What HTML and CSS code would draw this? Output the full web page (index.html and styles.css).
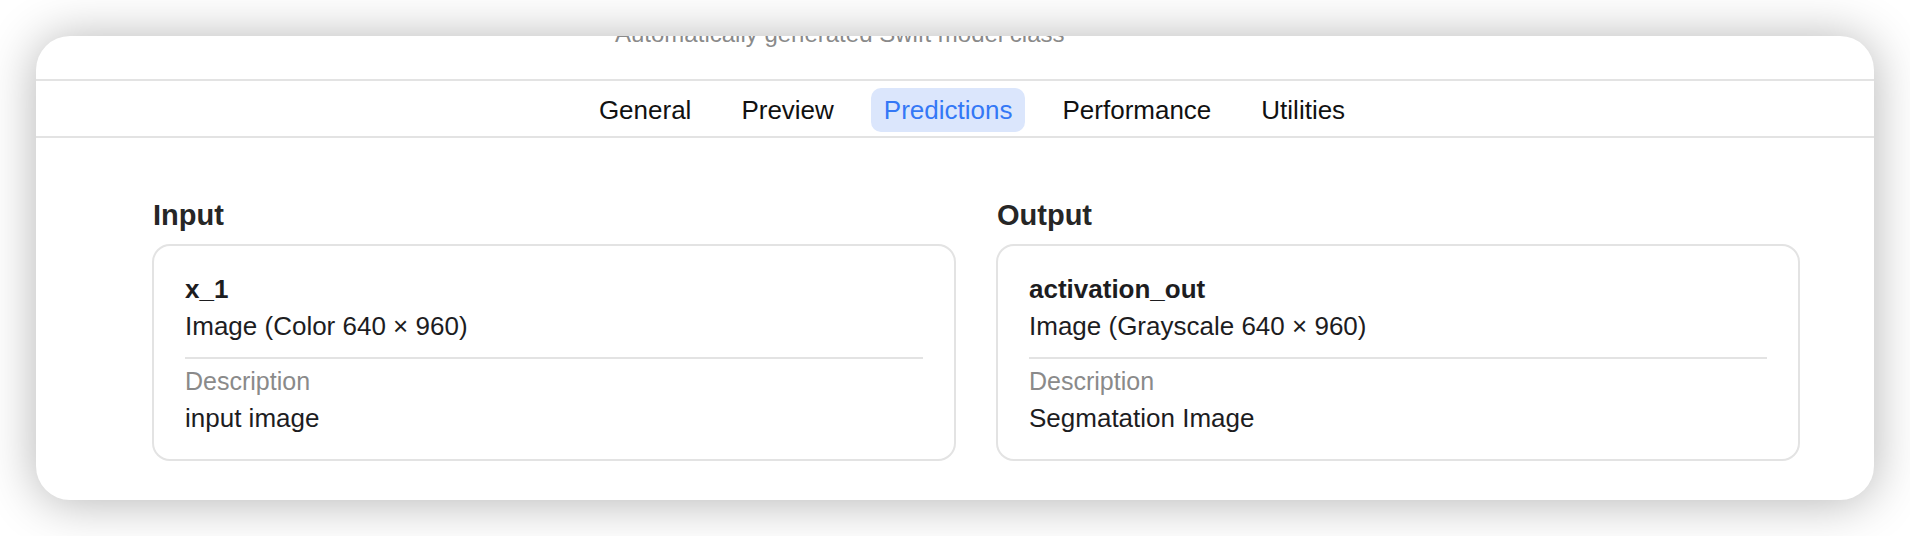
FILE: index.html
```html
<!DOCTYPE html>
<html lang="en">
<head>
<meta charset="utf-8">
<title>Model</title>
<link rel="stylesheet" href="styles.css">
</head>
<body>
<div class="window">
  <header class="titlebar">
    <p class="subtitle">Automatically generated Swift model class</p>
  </header>
  <nav class="tabs">
    <span class="tab">General</span>
    <span class="tab">Preview</span>
    <span class="tab active">Predictions</span>
    <span class="tab">Performance</span>
    <span class="tab">Utilities</span>
  </nav>
  <main class="content">
    <section class="column">
      <h2 class="heading">Input</h2>
      <div class="card">
        <div class="name">x_1</div>
        <div class="type">Image (Color 640 × 960)</div>
        <div class="sep"></div>
        <div class="label">Description</div>
        <div class="value">input image</div>
      </div>
    </section>
    <section class="column">
      <h2 class="heading">Output</h2>
      <div class="card">
        <div class="name">activation_out</div>
        <div class="type">Image (Grayscale 640 × 960)</div>
        <div class="sep"></div>
        <div class="label">Description</div>
        <div class="value">Segmatation Image</div>
      </div>
    </section>
  </main>
</div>
</body>
</html>
```

FILE: styles.css
```css
html, body {
  margin: 0;
  background: #ffffff;
}

body {
  padding: 36px;
  font-family: "Liberation Sans", Arial, sans-serif;
}

.window {
  height: 464px;
  box-sizing: border-box;
  background: #ffffff;
  border-radius: 34px;
  overflow: hidden;
  box-shadow: 0 2px 50px rgba(0, 0, 0, 0.3);
}

.titlebar {
  height: 45px;
  box-sizing: border-box;
  overflow: hidden;
  border-bottom: 2px solid #e3e3e3;
  padding-left: 579px;
}

.subtitle {
  margin: -16px 0 0;
  font-size: 24px;
  line-height: 28px;
  color: #8a8a8a;
  white-space: nowrap;
}

.tabs {
  display: flex;
  justify-content: center;
  align-items: flex-start;
  gap: 24px;
  height: 57px;
  box-sizing: border-box;
  padding: 7px 0 0 34px;
  border-bottom: 2px solid #e3e3e3;
}

.tab {
  height: 44px;
  line-height: 44px;
  padding: 0 13px;
  border-radius: 10px;
  font-size: 26px;
  color: #111111;
}

.tab.active {
  background: #dbe6fc;
  color: #3478f6;
}

.content {
  display: grid;
  grid-template-columns: 1fr 1fr;
  column-gap: 40px;
  padding: 60px 74px 0 116px;
}

.heading {
  margin: 0 0 12px 1px;
  font-size: 29px;
  line-height: 34px;
  font-weight: 700;
  color: #262626;
}

.card {
  border: 2px solid #e3e3e3;
  border-radius: 18px;
  padding: 25px 31px 22px;
}

.name {
  font-size: 26px;
  line-height: 37px;
  font-weight: 700;
  color: #1d1d1f;
}

.type,
.value {
  font-size: 26px;
  line-height: 37px;
  color: #1d1d1f;
}

.sep {
  height: 2px;
  background: #e3e3e3;
  margin: 12px 0 4px;
}

.label {
  font-size: 25px;
  line-height: 37px;
  color: #8a8a8a;
}
```
